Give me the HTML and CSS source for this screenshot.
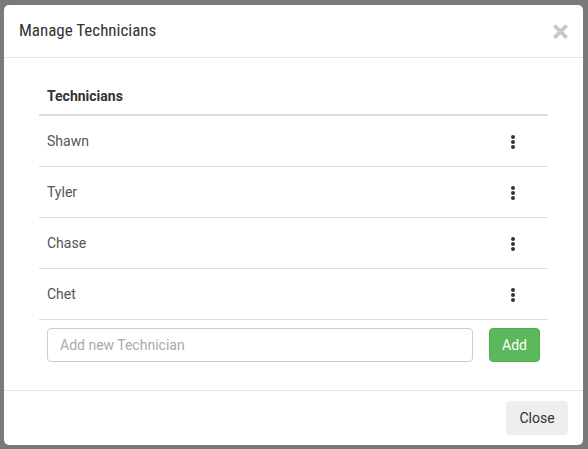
FILE: index.html
```html
<!DOCTYPE html>
<html lang="en">
<head>
  <meta charset="UTF-8">
  <title>Manage Technicians</title>
  <link rel="stylesheet" href="styles.css">
</head>
<body>
<div class="backdrop">
  <div class="modal">
    <div class="modal-header">
      <h4 class="modal-title">Manage Technicians</h4>
      <span class="close">&times;</span>
    </div>
    <div class="modal-body">
      <table class="tech-table">
        <thead>
          <tr><th>Technicians</th><th></th></tr>
        </thead>
        <tbody>
          <tr><td>Shawn</td><td class="menu"><span class="dots"><i></i><i></i><i></i></span></td></tr>
          <tr><td>Tyler</td><td class="menu"><span class="dots"><i></i><i></i><i></i></span></td></tr>
          <tr><td>Chase</td><td class="menu"><span class="dots"><i></i><i></i><i></i></span></td></tr>
          <tr><td>Chet</td><td class="menu"><span class="dots"><i></i><i></i><i></i></span></td></tr>
        </tbody>
      </table>
      <div class="add-row">
        <input type="text" placeholder="Add new Technician">
        <button class="btn btn-success">Add</button>
      </div>
    </div>
    <div class="modal-footer">
      <button class="btn btn-default">Close</button>
    </div>
  </div>
</div>
</body>
</html>
```
FILE: styles.css
```css
body {
  margin: 0;
  font-family: Roboto, "Liberation Sans", sans-serif;
  font-size: 14px;
  color: #333;
  background: #7a7a7a;
}
.backdrop {
  width: 588px;
  height: 449px;
  padding: 5px 0 0 4px;
  box-sizing: border-box;
}
.modal {
  width: 579px;
  height: 440px;
  background: #fff;
  border-radius: 5px;
  display: flex;
  flex-direction: column;
}
.modal-header {
  display: flex;
  justify-content: space-between;
  align-items: center;
  padding: 14px 15px 15px 15px;
  border-bottom: 1px solid #e5e5e5;
}
.modal-title {
  margin: 0;
  font-family: "Liberation Sans Narrow", "Roboto Condensed", Roboto, sans-serif;
  font-size: 17px;
  font-weight: 400;
  line-height: 23px;
  color: #333;
}
.close {
  font-size: 32px;
  font-weight: bold;
  line-height: 20px;
  color: #c8c8c8;
  margin-right: -1px;
}
.modal-body {
  flex: 1;
  padding: 20px 35px 0 35px;
}
.tech-table {
  width: 100%;
  border-collapse: collapse;
}
.tech-table th {
  text-align: left;
  padding: 8px;
  line-height: 20px;
  font-weight: 700;
  border-bottom: 2px solid #ddd;
}
.tech-table td {
  padding: 15px 8px;
  line-height: 20px;
  color: #555;
  border-bottom: 1px solid #ddd;
}
.tech-table .menu {
  width: 30px;
  text-align: left;
}
.dots {
  display: inline-flex;
  flex-direction: column;
  gap: 1px;
  vertical-align: middle;
  margin-left: 1px;
}
.dots i {
  width: 4px;
  height: 4px;
  border-radius: 50%;
  background: #333;
}
.add-row {
  display: flex;
  align-items: center;
  gap: 16px;
  padding: 8px 8px 0 8px;
}
.add-row input {
  width: 427px;
  height: 34px;
  box-sizing: border-box;
  padding: 6px 12px;
  font-family: inherit;
  font-size: 14px;
  border: 1px solid #ccc;
  border-radius: 4px;
}
.add-row input::placeholder {
  color: #aaa;
}
.btn {
  height: 34px;
  padding: 6px 12px;
  font-family: inherit;
  font-size: 14px;
  border-radius: 4px;
  border: 1px solid transparent;
  cursor: pointer;
}
.btn-success {
  width: 51px;
  background: #5cb85c;
  border-color: #4cae4c;
  color: #fff;
}
.btn-default {
  width: 62px;
  background: #eee;
  color: #333;
}
.modal-footer {
  display: flex;
  justify-content: flex-end;
  padding: 10px 15px;
  border-top: 1px solid #e5e5e5;
}
```
